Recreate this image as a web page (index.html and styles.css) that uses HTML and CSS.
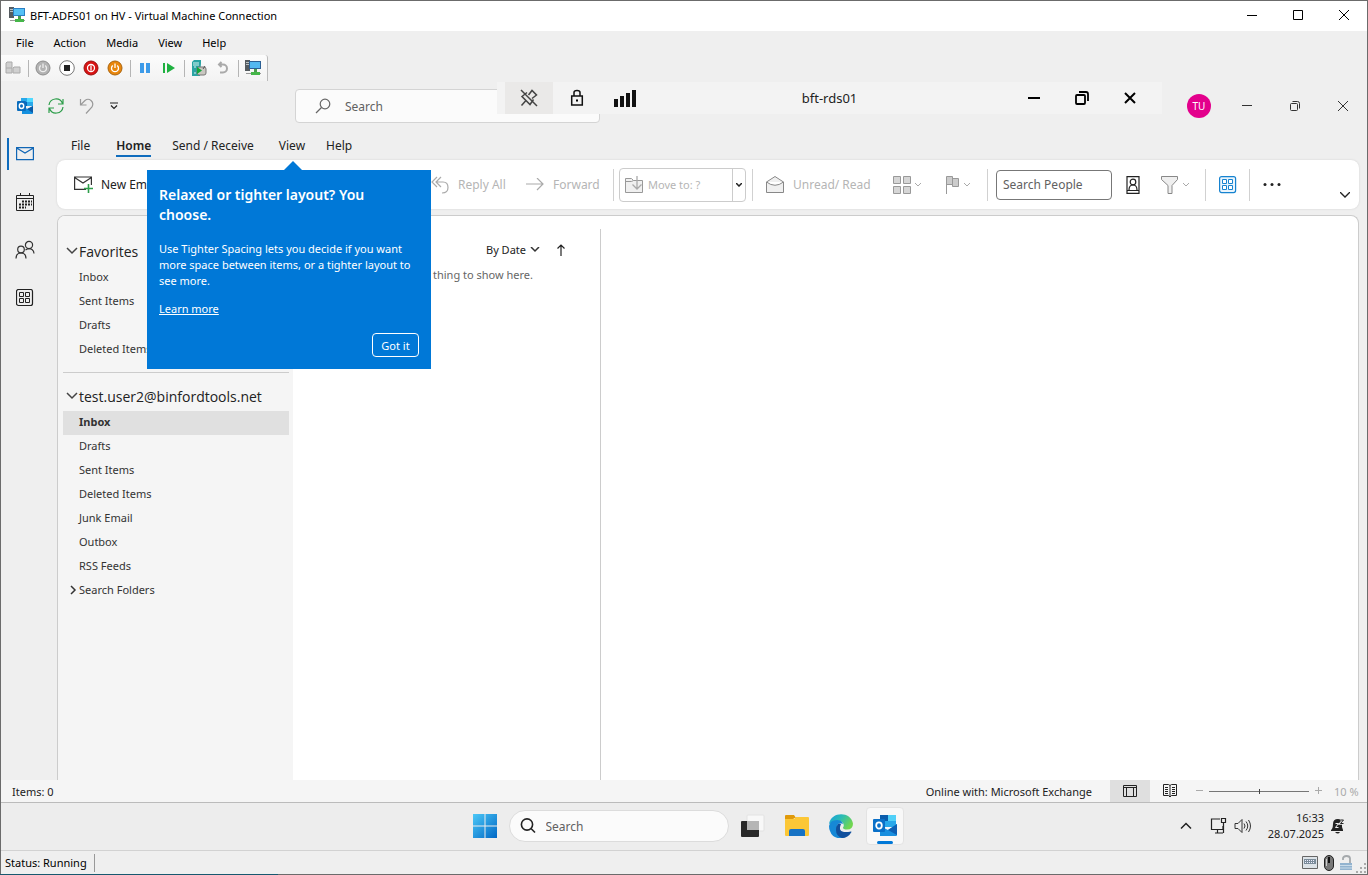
FILE: index.html
```html
<!DOCTYPE html>
<html lang="en">
<head>
    <meta charset="UTF-8">
    <meta name="viewport" content="width=device-width, initial-scale=1.0">
    <title>BFT-ADFS01 on HV - Virtual Machine Connection</title>
    <link rel="stylesheet" href="styles.css">
</head>
<body>
<div class="vm">
    <header class="vm-title">
        <svg width="16" height="16" viewBox="0 0 16 16"><path d="M0 0h5v11H0z" fill="#555b60"/><path d="M1 2.500h3M1 4.500h3" stroke="#b8c0c4"/><path d="M4 1h12v8H4z" fill="#2b7fc4"/><path d="M5 2h10v6H5z" fill="#54c0f5"/><path d="M9 9h3v3H9z" fill="#4a9c4e"/><path d="M1 13h15v1H1z" fill="#999"/><path d="M6 12h9v3H6z" fill="#45b649"/></svg>
        <span class="vm-name">BFT-ADFS01 on HV - Virtual Machine Connection</span>
        <button class="vm-win" aria-label="Minimize"><svg width="12" height="12" viewBox="0 0 12 12"><path d="M1 6.500h10" stroke="#000"/></svg></button>
        <button class="vm-win" aria-label="Maximize"><svg width="12" height="12" viewBox="0 0 12 12"><path d="M1.500 1.500h9v9h-9z" fill="none" stroke="#000"/></svg></button>
        <button class="vm-win" aria-label="Close"><svg width="12" height="12" viewBox="0 0 12 12"><path d="M1 1l10 10M11 1L1 11" stroke="#000"/></svg></button>
    </header>
    <nav class="vm-menu">
        <button>File</button><button>Action</button><button>Media</button><button>View</button><button>Help</button>
    </nav>
    <div class="vm-tools">
        <button aria-label="Ctrl Alt Delete"><svg width="16" height="16" viewBox="0 0 16 16"><path d="M1 8V3l1-1h5v6M1 8h6v5H1zM8 13V8l1-1h6v6z" fill="#d0d0d0" stroke="#aaa"/></svg></button>
        <i class="bar"></i>
        <button aria-label="Start"><svg width="16" height="16" viewBox="0 0 16 16"><circle cx="8" cy="8" r="7" fill="#b3b3b3" stroke="#8d8d8d"/><path d="M5.800 5.500a3.500 3.500 0 1 0 4.400 0M8 3.500v4.500" fill="none" stroke="#eee" stroke-width="1.300"/></svg></button>
        <button aria-label="Turn off"><svg width="16" height="16" viewBox="0 0 16 16"><circle cx="8" cy="8" r="7.300" fill="#fff" stroke="#777"/><path d="M5 5h6v6H5z" fill="#222"/></svg></button>
        <button aria-label="Shut down"><svg width="16" height="16" viewBox="0 0 16 16"><circle cx="8" cy="8" r="7" fill="#d81313" stroke="#9b1010"/><circle cx="8" cy="8" r="3.500" fill="none" stroke="#fff" stroke-width="1.300"/><path d="M8 5.500v5" stroke="#fff" stroke-width="1.300"/></svg></button>
        <button aria-label="Save"><svg width="16" height="16" viewBox="0 0 16 16"><circle cx="8" cy="8" r="7" fill="#e8860c" stroke="#a9640e"/><path d="M5.800 5.500a3.500 3.500 0 1 0 4.400 0M8 3.500v4.500" fill="none" stroke="#fff" stroke-width="1.300"/></svg></button>
        <i class="bar"></i>
        <button aria-label="Pause"><svg width="16" height="16" viewBox="0 0 16 16"><path d="M3 3h4v10H3zM9 3h4v10H9z" fill="#3d9be9"/></svg></button>
        <button aria-label="Reset"><svg width="16" height="16" viewBox="0 0 16 16"><path d="M2 3h2v10H2zM6 3v10l8-5z" fill="#1fb141"/></svg></button>
        <i class="bar"></i>
        <button aria-label="Checkpoint"><svg width="16" height="16" viewBox="0 0 16 16"><path d="M1 2l2-2h7v3l-1 13H1z" fill="#2aa3a3"/><path d="M2 3h6M2 5h6M3 7h2M3 13h2" stroke="#d8f3f2"/><rect x="6" y="7" width="9" height="8" rx="2" fill="#c9c7c0" stroke="#777"/><path d="M6 7l5 3.500L6 14z" fill="#11a83a"/><path d="M12 9l2-3" stroke="#555"/></svg></button>
        <button aria-label="Revert"><svg width="16" height="16" viewBox="0 0 16 16"><path d="M6.500 2L4 4.500 6.500 7M4.500 4.500H8a4 4 0 0 1 0 8H5" fill="none" stroke="#aaa" stroke-width="2"/></svg></button>
        <i class="bar"></i>
        <button aria-label="Enhanced session"><svg width="16" height="16" viewBox="0 0 16 16"><path d="M0 0h5v11H0z" fill="#555b60"/><path d="M1 2.500h3M1 4.500h3" stroke="#b8c0c4"/><path d="M4 1h12v8H4z" fill="#2b5f94"/><path d="M5 2h10v6H5z" fill="#54b8f0"/><path d="M9 9h3v3H9z" fill="#4a9c4e"/><path d="M1 13h15v1H1z" fill="#999"/><path d="M6 12h9v3H6z" fill="#45b649"/></svg></button>
    </div>

    <div class="screen">
        <div class="rdp-bar">
            <button class="rdp-pin" aria-label="Unpin"><svg width="18" height="18" viewBox="0 0 18 18" fill="none" stroke="#444" stroke-width="1.500"><path d="M1 1l16 16M1.500 16.500L5.500 12M7 3.500l-5 4 8 8 3.500-5M8.500 6L12 1.500 16.500 6 12 9.500"/></svg></button>
            <button aria-label="Security"><svg width="14" height="18" viewBox="0 0 14 18"><path d="M1.700 7h10.600v9H1.700zM4 7V3.500Q4 1.500 7 1.500t3 2V7" fill="none" stroke="#111" stroke-width="1.500"/><path d="M6 10.500h2v2H6z"/></svg></button>
            <button aria-label="Connection"><svg width="22" height="18" viewBox="0 0 22 18"><path d="M0 10h4v8H0zM6 7h4v11H6zM12 4h4v14h-4zM18 1h4v17h-4z" fill="#111"/></svg></button>
            <span class="rdp-name">bft-rds01</span>
            <button aria-label="Minimize"><svg width="14" height="14" viewBox="0 0 14 14"><path d="M1 7h12" stroke="#000" stroke-width="2"/></svg></button>
            <button aria-label="Restore"><svg width="14" height="14" viewBox="0 0 14 14" fill="none" stroke="#000" stroke-width="1.800"><rect x="1" y="4" width="9" height="9" rx="1"/><path d="M4 1h7q2 0 2 2v7"/></svg></button>
            <button aria-label="Close"><svg width="14" height="14" viewBox="0 0 14 14"><path d="M2 2l10 10M12 2L2 12" stroke="#000" stroke-width="2"/></svg></button>
        </div>

        <header class="ol-title">
            <svg width="16" height="16" viewBox="0 0 16 16"><path d="M4 0h12v8H4z" fill="#28a8ea"/><path d="M10 0h6v4h-6z" fill="#50d9ff"/><path d="M4 4h6v4H4z" fill="#0364b8"/><path d="M5 8l5.500 3L16 8v7q0 1-1 1H5z" fill="#1490df"/><path d="M10 11l6 4V8z" fill="#0a5ba8"/><rect y="3" width="9" height="10" rx="1" fill="#0a6cbd"/><ellipse cx="4.500" cy="8" rx="2.200" ry="2.500" fill="none" stroke="#fff" stroke-width="1.400"/></svg>
            <button aria-label="Send and receive all"><svg width="16" height="16" viewBox="0 0 16 16" fill="none" stroke="#2e9e4b" stroke-width="1.200"><path d="M1 7a7 7 0 0 1 13.500-1.500M15 1v5h-5M15 9a7 7 0 0 1-13.500 1.500M1 15v-5h5"/></svg></button>
            <button aria-label="Undo"><svg width="16" height="16" viewBox="0 0 16 16" fill="none" stroke="#999" stroke-width="1.200"><path d="M1.500 1v6h6M1.500 7L6 2.500Q9 0 12 2.500t1 6.500L7 15.500"/></svg></button>
            <button aria-label="Customize toolbar"><svg width="8" height="8" viewBox="0 0 8 8" fill="none" stroke="#222" stroke-width="1.200"><path d="M0 1h8M1 3.500l3 3 3-3"/></svg></button>
            <label class="ol-search">
                <svg width="16" height="16" viewBox="0 0 16 16" fill="none" stroke="#666" stroke-width="1.200"><circle cx="10" cy="6" r="4.800"/><path d="M6.500 9.500L1 15"/></svg>
                <input type="text" placeholder="Search" aria-label="Search mail">
            </label>
            <button class="avatar">TU</button>
            <button class="ol-win" aria-label="Minimize window"><svg width="10" height="10" viewBox="0 0 10 10"><path d="M0 4.500h10" stroke="#333"/></svg></button>
            <button class="ol-win" aria-label="Restore window"><svg width="10" height="10" viewBox="0 0 10 10" fill="none" stroke="#333"><rect x=".5" y="2.500" width="7" height="7" rx="1"/><path d="M2.500.5h5q2 0 2 2v5"/></svg></button>
            <button class="ol-win" aria-label="Close window"><svg width="10" height="10" viewBox="0 0 10 10"><path d="M0 0l10 10M10 0L0 10" stroke="#333"/></svg></button>
        </header>

        <div class="ol-body">
            <nav class="rail">
                <button class="on" aria-label="Mail"><svg width="18" height="18" viewBox="0 0 18 18" fill="none" stroke="#1066b5" stroke-width="1.200"><path d="M.6 2.600h16.800v12H.6zM.6 3L9 8l8.400-5"/></svg></button>
                <button aria-label="Calendar"><svg width="18" height="18" viewBox="0 0 18 18" fill="none" stroke="#222"><path d="M.5 2.500h17v15H.5zM.5 5.500h17M4.500 0v3M13.500 0v3"/><path d="M6 8.500h10M3 11.500h13M3 14.500h7" stroke-width="2" stroke-dasharray="2 1"/></svg></button>
                <button aria-label="People"><svg width="20" height="20" viewBox="0 0 20 20" fill="none" stroke="#333" stroke-width="1.200"><circle cx="6" cy="9.500" r="3.300"/><path d="M1 18.500q0-5.500 5-5.500t5 5.500"/><circle cx="14" cy="5" r="3.600"/><path d="M10.500 10q3.500-2.500 6.500-.5 2 1.500 2 4"/></svg></button>
                <button aria-label="More apps"><svg width="18" height="18" viewBox="0 0 18 18" fill="none" stroke="#222"><rect x=".5" y=".5" width="16" height="16" rx="2" stroke-width="1.200"/><path d="M3.500 3.500h4v4h-4zM9.500 3.500h4v4h-4zM3.500 9.500h4v4h-4zM9.500 9.500h4v4h-4z"/></svg></button>
            </nav>

            <main class="main">
                <nav class="tabs">
                    <button>File</button><button class="on">Home</button><button>Send / Receive</button><button>View</button><button>Help</button>
                </nav>
                <div class="ribbon">
                    <button class="cmd new"><svg width="20" height="18" viewBox="0 0 20 18" fill="none" stroke="#333" stroke-width="1.200"><path d="M12 13.400H.6V1h16.800v8M.6 1.500L9 7l8.400-5.500"/><path d="M10 12.500h9M14.500 8v9" stroke="#2e9e4b" stroke-width="1.600"/></svg>New Email</button>
                    <button class="cmd dim reply"><svg width="18" height="18" viewBox="0 0 18 18" fill="none" stroke="#aaa" stroke-width="1.200"><path d="M6 1L1 6l5 5M10 1L5 6l5 5M5 6h7q5 0 5 5.500T11 17"/></svg>Reply All</button>
                    <button class="cmd dim forward"><svg width="18" height="14" viewBox="0 0 18 14" fill="none" stroke="#aaa" stroke-width="1.200"><path d="M0 6h17M11 0l6 6-6 6"/></svg>Forward</button>
                    <i class="sep"></i>
                    <div class="move">
                        <button class="cmd dim"><svg width="18" height="18" viewBox="0 0 18 18" fill="#f0f0f0" stroke="#999"><path d="M.5 2.500h6l2 2h9v12H.5z"/><path d="M.5 5.500h6l2-1" fill="none"/><path d="M12 0v13M7.500 8.500L12 13l4.500-4.500" fill="none" stroke="#aaa" stroke-width="1.300"/></svg>Move to: ?</button>
                        <button class="drop" aria-label="Move options"><svg width="6" height="4" viewBox="0 0 6 4"><path d="M0 0l3 3 3-3" fill="none" stroke="#222" stroke-width="1.500"/></svg></button>
                    </div>
                    <i class="sep"></i>
                    <button class="cmd dim unread"><svg width="18" height="18" viewBox="0 0 18 18" fill="#f0f0f0" stroke="#888"><path d="M.5 6L9 .5 17.500 6v10.500H.5zM.5 6Q9 12.500 17.500 6"/></svg>Unread/ Read</button>
                    <button class="cmd split" aria-label="Categorize"><svg width="18" height="18" viewBox="0 0 18 18" fill="#d6d6d6" stroke="#999"><path d="M.5.5h7v7h-7zM10.500.5h7v7h-7zM.5 10.500h7v7h-7zM10.500 10.500h7v7h-7z"/></svg><svg width="6" height="4" viewBox="0 0 6 4"><path d="M0 0l3 3 3-3" fill="none" stroke="#aaa"/></svg></button>
                    <button class="cmd split flag" aria-label="Follow up"><svg width="14" height="18" viewBox="0 0 14 18" fill="#ccc" stroke="#999"><path d="M6.500 2.500h6v8h-6z"/><path d="M.5 18V.5h6v8h-6"/></svg><svg width="6" height="4" viewBox="0 0 6 4"><path d="M0 0l3 3 3-3" fill="none" stroke="#aaa"/></svg></button>
                    <i class="sep"></i>
                    <input class="people" type="text" placeholder="Search People" aria-label="Search people">
                    <button class="cmd" aria-label="Address book"><svg width="14" height="18" viewBox="0 0 14 18" fill="none" stroke="#222" stroke-width="1.200"><path d="M1 .6h12v16.800H1zM1 14.500h12M3 14q0-5 4-5t4 5"/><circle cx="7" cy="6" r="2.800"/></svg></button>
                    <button class="cmd split filter" aria-label="Filter email"><svg width="18" height="18" viewBox="0 0 18 18" fill="#efefef" stroke="#888"><path d="M.5.5h16v3l-5.500 6v8H7v-8l-6.500-6z"/></svg><svg width="6" height="4" viewBox="0 0 6 4"><path d="M0 0l3 3 3-3" fill="none" stroke="#aaa"/></svg></button>
                    <i class="sep"></i>
                    <button class="cmd addins" aria-label="All apps"><svg width="18" height="18" viewBox="0 0 18 18" fill="#eaf5fd" stroke="#1683d0"><rect x=".6" y=".6" width="16" height="16" rx="2" stroke-width="1.200"/><path d="M3.500 3.500h4v4h-4zM9.500 3.500h4v4h-4zM3.500 9.500h4v4h-4zM9.500 9.500h4v4h-4z" fill="#fff"/></svg></button>
                    <i class="sep"></i>
                    <button class="cmd more" aria-label="More commands"><svg width="18" height="4" viewBox="0 0 18 4" fill="#222"><circle cx="2" cy="1.500" r="1.500"/><circle cx="9" cy="1.500" r="1.500"/><circle cx="16" cy="1.500" r="1.500"/></svg></button>
                    <button class="collapse" aria-label="Ribbon options"><svg width="10" height="6" viewBox="0 0 10 6"><path d="M0 0l5 5 5-5" fill="none" stroke="#222" stroke-width="1.300"/></svg></button>
                </div>

                <div class="panes">
                    <aside class="folders">
                        <h2><svg width="12" height="8" viewBox="0 0 12 8"><path d="M1 1l5 5 5-5" fill="none" stroke="#444" stroke-width="1.500"/></svg>Favorites</h2>
                        <ul>
                            <li><a href="#">Inbox</a></li>
                            <li><a href="#">Sent Items</a></li>
                            <li><a href="#">Drafts</a></li>
                            <li><a href="#">Deleted Items</a></li>
                        </ul>
                        <hr>
                        <h2><svg width="12" height="8" viewBox="0 0 12 8"><path d="M1 1l5 5 5-5" fill="none" stroke="#444" stroke-width="1.500"/></svg>test.user2@binfordtools.net</h2>
                        <ul>
                            <li class="on"><a href="#">Inbox</a></li>
                            <li><a href="#">Drafts</a></li>
                            <li><a href="#">Sent Items</a></li>
                            <li><a href="#">Deleted Items</a></li>
                            <li><a href="#">Junk Email</a></li>
                            <li><a href="#">Outbox</a></li>
                            <li><a href="#">RSS Feeds</a></li>
                            <li class="tree"><svg width="8" height="10" viewBox="0 0 8 10"><path d="M2 1l4 4-4 4" fill="none" stroke="#333" stroke-width="1.500"/></svg><a href="#">Search Folders</a></li>
                        </ul>
                    </aside>
                    <section class="list">
                        <div class="sort">
                            <button>By Date<svg width="10" height="6" viewBox="0 0 10 6"><path d="M1 0l4 4 4-4" fill="none" stroke="#333" stroke-width="1.500"/></svg></button>
                            <button aria-label="Sort direction"><svg width="8" height="12" viewBox="0 0 8 12"><path d="M4 12V1M.5 4.500L4 1l3.500 3.500" fill="none" stroke="#222" stroke-width="1.200"/></svg></button>
                        </div>
                        <p>thing to show here.</p>
                    </section>
                    <section class="reading"></section>
                </div>

                <div class="callout">
                    <h3>Relaxed or tighter layout? You choose.</h3>
                    <p>Use Tighter Spacing lets you decide if you want more space between items, or a tighter layout to see more.</p>
                    <a href="#">Learn more</a>
                    <button>Got it</button>
                </div>
            </main>
        </div>

        <footer class="ol-status">
            <span class="items">Items: 0</span>
            <span class="online">Online with: Microsoft Exchange</span>
            <button class="view on" aria-label="Normal view"><svg width="14" height="12" viewBox="0 0 14 12" fill="none" stroke="#222"><path d="M.5.5h13v11H.5zM.5 2.500h13M3.500 2.500v9M10.500 2.500v9"/></svg></button>
            <button class="view" aria-label="Reading view"><svg width="14" height="14" viewBox="0 0 14 14" fill="none" stroke="#222"><path d="M.5.5h5L7 1.500 8.500.5h5v11h-5L7 13 5.500 11.500h-5zM7 1.500V13M2 3.500h3M2 5.500h3M2 7.500h3M2 9.500h3M9 3.500h3M9 5.500h3M9 7.500h3M9 9.500h3"/></svg></button>
            <button class="zoom-btn" aria-label="Zoom out"><svg width="8" height="8" viewBox="0 0 8 8"><path d="M0 3.500h7" stroke="#aaa"/></svg></button>
            <input class="zoom" type="range" min="0" max="100" value="50" aria-label="Zoom">
            <button class="zoom-btn" aria-label="Zoom in"><svg width="8" height="8" viewBox="0 0 8 8"><path d="M0 3.500h7M3.500 0v7" stroke="#aaa"/></svg></button>
            <span class="percent">10 %</span>
        </footer>

        <div class="taskbar">
            <div class="apps">
                <button aria-label="Start menu"><svg width="24" height="24" viewBox="0 0 24 24"><defs><linearGradient id="win" x2="1" y2="1"><stop stop-color="#4cc8f7"/><stop offset="1" stop-color="#0067c5"/></linearGradient></defs><path d="M0 0h11.500v11.500H0zM12.500 0H24v11.500H12.500zM0 12.500h11.500V24H0zM12.500 12.500H24V24H12.500z" fill="url(#win)"/></svg></button>
                <label class="tb-search">
                    <svg width="16" height="16" viewBox="0 0 16 16" fill="none" stroke="#222" stroke-width="1.600"><circle cx="7" cy="6.500" r="5.600"/><path d="M11 10.500l4 4"/></svg>
                    <input type="text" placeholder="Search" aria-label="Search Windows">
                </label>
                <button class="app" aria-label="Task view"><svg width="24" height="24" viewBox="0 0 24 24"><rect x="6" y="1" width="17" height="16" rx="1" fill="#f8f8f8" stroke="#e2e2e2"/><rect x="0" y="7" width="18" height="16" rx="1" fill="#292929"/><path d="M6 7h12v9H6z" fill="#b5b5b5"/></svg></button>
                <button class="app" aria-label="File Explorer"><svg width="24" height="24" viewBox="0 0 24 24"><path d="M0 2q0-1 1-1h8l2 3h-2l-1 2H0z" fill="#e09a0b"/><path d="M0 5h9l2-2h12q1 0 1 1v17q0 1-1 1H1q-1 0-1-1z" fill="#fcc736"/><path d="M4 22v-5q0-2 2-2h12q2 0 2 2v5z" fill="#1672c4"/></svg></button>
                <button class="app" aria-label="Edge"><svg width="24" height="24" viewBox="0 0 24 24"><defs><linearGradient id="edge" x2="1" y2=".5"><stop stop-color="#159de0"/><stop offset=".5" stop-color="#2cbcb4"/><stop offset="1" stop-color="#71d650"/></linearGradient></defs><path d="M0 10C2-3 22-3 24 9.500q0 6-6 6-4 0-4-2 2-3-1-5.500Q8 4.500 0 10z" fill="url(#edge)"/><path d="M0 12Q1 6 8 6q5 0 6 4-5-2-6 2-1 9 8 12Q4 26 1 17q-1-2-1-5z" fill="#1688d6"/><path d="M9 10q2-1 3 0-4 9 7 8 4-1 3.500 0Q19 24 13 24q-6-2-6-8 0-4 2-6z" fill="#11509d"/></svg></button>
                <button class="app active" aria-label="Outlook"><svg width="24" height="24" viewBox="0 0 24 24"><path d="M7 1h16v12H7z" fill="#28a8ea"/><path d="M15 1h8v6h-8z" fill="#50d0f8"/><path d="M7 1h8v6H7z" fill="#0a5dac"/><path d="M7 12l8 4 9-6v11q0 1-1 1H7z" fill="#1a90df"/><path d="M15 16l9 5V10z" fill="#0d60b5"/><rect y="5" width="12" height="13" rx="1" fill="#0a70c8"/><ellipse cx="6" cy="11.500" rx="2.800" ry="3.200" fill="none" stroke="#fff" stroke-width="1.800"/></svg></button>
            </div>
            <div class="tray">
                <button aria-label="Hidden icons"><svg width="12" height="8" viewBox="0 0 12 8"><path d="M1 6.500l5-5 5 5" fill="none" stroke="#222" stroke-width="1.500"/></svg></button>
                <button aria-label="Network"><svg width="18" height="18" viewBox="0 0 18 18" fill="none" stroke="#222" stroke-width="1.200"><path d="M10 2H1.500v10.500H13V9M5 16h8M7.500 12.500V16"/><path d="M11.500 1.500h4v4h-4zM13.500 5.500V16"/></svg></button>
                <button aria-label="Volume"><svg width="18" height="16" viewBox="0 0 18 16" fill="none" stroke="#333"><path d="M1 5.500h3l4-4v13l-4-4H1zM10 5.500q2 2.500 0 5M12 3.500q3.500 4.500 0 9M14.500 2q4 6 0 12"/></svg></button>
                <time>16:33<br>28.07.2025</time>
                <button aria-label="Notifications"><svg width="16" height="16" viewBox="0 0 16 16"><path d="M2 11q1-2 1-5 0-5 5-5 3 0 4 2v6l1 3v1H1v-1zM5 14h5q-2 3-5 0z" fill="#222"/><path d="M5.500 5.500h3L5.500 9.500h3" fill="none" stroke="#eee"/><path d="M10.500 2h3L10.500 5.500h3" fill="none" stroke="#eee" stroke-width="2.600"/><path d="M10.500 2h3L10.500 5.500h3" fill="none" stroke="#222"/></svg></button>
            </div>
        </div>
    </div>

    <footer class="vm-status">
        <span>Status: Running</span>
        <svg width="16" height="14" viewBox="0 0 16 14"><path d="M.5.5h15v12H.5z" fill="#dde3e8" stroke="#666"/><path d="M2 3h12v5H2z" fill="#7b8c9a"/><path d="M3 4.500h10M3 6.500h10" stroke="#eef" stroke-dasharray="1 1"/></svg>
        <svg width="10" height="16" viewBox="0 0 10 16"><rect x=".5" y=".5" width="9" height="15" rx="4.500" fill="#777" stroke="#222"/><path d="M5 2v6" stroke="#111" stroke-width="2"/><path d="M2.500 4v7" stroke="#ccc"/></svg>
        <svg width="12" height="16" viewBox="0 0 12 16"><path d="M3 5V3.500Q3 1 6.500 1T10 3.500V8" fill="none" stroke="#a5a9ac" stroke-width="1.800"/><path d="M0 8h12v7H0z" fill="#92b3cf"/><path d="M0 10.500h12M0 13h12" stroke="#c9dbe9"/></svg>
        <svg class="grip" width="11" height="11" viewBox="0 0 11 11"><path d="M8 0h2v2H8zM4 4h2v2H4zM8 4h2v2H8zM0 8h2v2H0zM4 8h2v2H4zM8 8h2v2H8z" fill="#aaa"/></svg>
    </footer>
</div>
</body>
</html>
```
FILE: styles.css
```css
* {
    box-sizing: border-box;
}
body {
    margin: 0;
    padding: 1px;
    background: linear-gradient(#17586f, #17586f) left bottom / 278px 1px no-repeat #6b6b6b;
    font-family: "Noto Sans", "Open Sans", sans-serif;
    font-size: 11px;
    color: #222;
}
button, input {
    font: inherit;
    color: inherit;
    border: none;
    background: none;
    padding: 0;
    margin: 0;
}
button {
    display: flex;
    align-items: center;
    justify-content: center;
    white-space: nowrap;
}
svg {
    display: block;
    flex: none;
}
.vm {
    min-height: calc(100vh - 2px);
    display: flex;
    flex-direction: column;
    background: #efefef;
}

/* Hyper-V window */
.vm-title {
    height: 30px;
    display: flex;
    align-items: center;
    padding: 0 0 2px 8px;
    background: #fff;
    color: #000;
}
.vm-name {
    flex: 1;
    padding-left: 5px;
}
.vm-win {
    width: 46px;
    height: 28px;
}
.vm-menu {
    height: 24px;
    display: flex;
    align-items: center;
    gap: 20px;
    padding: 0 0 2px 15px;
    color: #000;
}
.vm-tools {
    align-self: flex-start;
    height: 26px;
    display: flex;
    align-items: center;
    gap: 8px;
    padding: 0 6px 0 4px;
    background: linear-gradient(#fcfcfc, #f3f3f3);
    border-right: 1px solid #bbb;
    border-radius: 0 3px 0 0;
}
.bar {
    width: 1px;
    height: 17px;
    background: #b5b5b5;
    margin: 0 -2px 0 -1px;
}
.vm-status {
    height: 24px;
    display: flex;
    align-items: center;
    gap: 6px;
    padding-left: 4px;
    border-top: 1px solid #d2d2d2;
    color: #000;
}
.vm-status span {
    margin-right: auto;
    padding-right: 7px;
    border-right: 1px solid #999;
    line-height: 18px;
}
.grip {
    align-self: flex-end;
    margin-left: -2px;
}

/* Remote session bar */
.screen {
    position: relative;
    flex: 1;
    display: flex;
    flex-direction: column;
}
.rdp-bar {
    position: absolute;
    top: 1px;
    left: 496px;
    right: 205px;
    height: 32px;
    display: flex;
    padding: 0 8px;
    background: #f3f3f3;
    z-index: 2;
}
.rdp-bar button {
    width: 48px;
}
.rdp-bar .rdp-pin {
    background: #eae9e8;
}
.rdp-name {
    flex: 1;
    text-align: center;
    font-size: 13px;
    line-height: 32px;
}

/* Outlook title row */
.ol-title {
    height: 50px;
    display: flex;
    align-items: center;
    padding-left: 16px;
    gap: 15px;
}
.ol-search {
    width: 305px;
    height: 34px;
    margin-left: 162px;
    margin-right: auto;
    display: flex;
    align-items: center;
    gap: 14px;
    padding: 0 19px;
    background: #fbfbfb;
    border: 1px solid #d4d4d4;
    border-radius: 4px;
    font-size: 12px;
}
input {
    min-width: 0;
    flex: 1;
    outline: none;
}
input::placeholder {
    color: #616161;
    opacity: 1;
}
.avatar {
    width: 24px;
    height: 24px;
    border-radius: 50%;
    background: #e3008c;
    color: #fff;
    font-size: 10px;
    margin-right: -3px;
}
.ol-win {
    width: 48px;
    height: 32px;
    margin-left: -15px;
}
.ol-win:nth-last-child(3) {
    margin-left: 0;
}

/* Outlook body */
.ol-body {
    flex: 1;
    display: flex;
}
.rail {
    width: 56px;
    padding-top: 7px;
    display: flex;
    flex-direction: column;
    gap: 16px;
}
.rail button {
    width: 34px;
    height: 32px;
    margin-left: 6px;
    border-left: 2px solid transparent;
}
.rail button.on {
    border-color: #0f6cbd;
}
.main {
    position: relative;
    flex: 1;
    min-width: 0;
    padding-right: 8px;
    display: flex;
    flex-direction: column;
}
.tabs {
    height: 29px;
    padding-left: 14px;
    display: flex;
    gap: 21px;
    font-size: 12px;
    align-items: flex-start;
}
.tabs button {
    height: 26px;
    padding-top: 4px;
    border-bottom: 2px solid transparent;
}
.tabs button:first-child {
    margin-right: 5px;
}
.tabs .on {
    font-weight: 600;
    border-color: #0f6cbd;
}
.tabs .on + button {
    padding-right: 4px;
}
.ribbon {
    height: 49px;
    display: flex;
    align-items: center;
    padding-left: 17px;
    background: #fff;
    border-radius: 8px;
    box-shadow: 0 0 2px #ccc;
    font-size: 12px;
}
.cmd {
    gap: 8px;
}
.dim {
    color: #b5b5b5;
}
.split {
    gap: 4px;
}
.new {
    width: 357px;
    gap: 7px;
    justify-content: flex-start;
}
.reply {
    width: 78px;
    gap: 9px;
    margin-right: 17px;
    justify-content: flex-start;
}
.forward {
    width: 76px;
    gap: 9px;
    margin-right: 11px;
    justify-content: flex-start;
}
.sep {
    width: 1px;
    height: 32px;
    background: #d1d1d1;
}
.move {
    width: 127px;
    height: 34px;
    margin: 0 6px 0 5px;
    display: flex;
    border: 1px solid #ccc;
    border-radius: 4px;
    font-size: 11px;
}
.move .cmd {
    flex: 1;
    gap: 5px;
    padding-left: 5px;
    justify-content: flex-start;
}
.drop {
    width: 13px;
    border-left: 1px solid #ccc;
}
.unread {
    width: 110px;
    gap: 9px;
    margin: 0 17px 0 13px;
    justify-content: flex-start;
}
.flag {
    margin: 0 17px 0 25px;
}
.people {
    flex: none;
    width: 116px;
    height: 30px;
    margin: 0 14px 0 8px;
    padding: 0 6px;
    border: 1px solid #777;
    border-radius: 4px;
}
.filter {
    margin: 0 16px 0 21px;
}
.addins {
    margin: 0 12px 0 13px;
}
.more {
    margin-left: 13px;
}
.collapse {
    align-self: flex-end;
    margin: 0 9px 11px auto;
}
.panes {
    flex: 1;
    display: flex;
    margin-top: 6px;
    background: #fff;
    border: 1px solid #ccc;
    border-bottom: none;
    border-radius: 8px 8px 0 0;
    overflow: hidden;
}

/* Folder pane */
.folders {
    width: 235px;
    padding: 21px 4px 0 5px;
    background: #f5f5f5;
}
.folders h2 {
    height: 29px;
    margin: 0;
    padding: 0 0 1px 3px;
    display: flex;
    align-items: center;
    gap: 1px;
    font-family: "Open Sans", sans-serif;
    font-size: 14px;
    font-weight: 400;
}
.folders ul {
    list-style: none;
    margin: 0;
    padding: 0;
}
.folders li {
    height: 24px;
    display: flex;
    align-items: center;
    padding: 0 0 3px 16px;
}
.folders li.on {
    background: #e0e0e0;
    font-weight: 700;
}
.folders li.tree {
    padding-left: 6px;
    gap: 2px;
}
.folders a {
    color: #333;
    text-decoration: none;
}
.folders hr {
    height: 1px;
    margin: 10px 0 9px;
    border: none;
    background: #ccc;
}
.list {
    width: 307px;
    padding-top: 26px;
}
.sort {
    display: flex;
    justify-content: flex-end;
    gap: 17px;
    padding-right: 35px;
}
.sort button {
    gap: 4px;
}
.list p {
    margin: 10px 0 0;
    padding-right: 67px;
    text-align: right;
    color: #666;
}
.reading {
    flex: 1;
    margin-top: 13px;
    border-left: 1px solid #ccc;
}

/* Teaching callout */
.callout {
    position: absolute;
    top: 39px;
    left: 90px;
    width: 284px;
    height: 199px;
    padding: 15px 12px 12px;
    display: flex;
    flex-direction: column;
    align-items: flex-start;
    background: #0078d7;
    color: #fff;
}
.callout::before {
    content: "";
    position: absolute;
    top: -9px;
    left: 137px;
    border: 9px solid transparent;
    border-top: none;
    border-bottom-color: #0078d7;
}
.callout h3 {
    margin: 0 0 16px;
    padding-right: 24px;
    font-size: 14px;
    font-weight: 600;
    line-height: 20px;
}
.callout p {
    margin: 0 0 12px;
    line-height: 16px;
}
.callout a {
    color: #fff;
    line-height: 16px;
}
.callout button {
    width: 47px;
    height: 24px;
    margin-top: auto;
    align-self: flex-end;
    border: 1px solid #fff;
    border-radius: 4px;
}

/* Outlook status bar */
.ol-status {
    height: 22px;
    display: flex;
    align-items: center;
    padding-left: 11px;
    background: #f5f5f5;
}
.items {
    margin-right: auto;
}
.online {
    margin-right: 18px;
}
.view {
    width: 40px;
    height: 22px;
}
.view.on {
    background: #dfdfdf;
}
.zoom-btn {
    width: 8px;
    margin-left: 6px;
}
.zoom {
    flex: none;
    width: 100px;
    height: 5px;
    margin-left: 5px;
    appearance: none;
    background: linear-gradient(#777, #777) center / 100% 1px no-repeat;
}
.zoom::-webkit-slider-thumb {
    appearance: none;
    width: 1px;
    height: 5px;
    background: #444;
}
.percent {
    width: 44px;
    padding-left: 11px;
    color: #aaa;
}

/* Windows taskbar */
.taskbar {
    height: 48px;
    display: flex;
    align-items: center;
    justify-content: flex-end;
    padding-bottom: 1px;
    border-top: 1px solid #bbb;
    background: #ededed;
}
.apps {
    flex: 1;
    display: flex;
    align-items: center;
    justify-content: center;
    padding-left: 195px;
}
.tb-search {
    width: 220px;
    height: 32px;
    margin: 0 -1px 0 12px;
    display: flex;
    align-items: center;
    gap: 10px;
    padding: 0 10px;
    background: #fbfbfb;
    border: 1px solid #dcdcdc;
    border-radius: 16px;
    font-size: 12px;
}
.app {
    position: relative;
    width: 38px;
    height: 38px;
    margin-left: 6px;
}
.app.active {
    background: #f8f8f8;
    border: 1px solid #e3e3e3;
    border-radius: 4px;
}
.app.active::after {
    content: "";
    position: absolute;
    bottom: 0;
    left: 10px;
    width: 16px;
    height: 3px;
    border-radius: 2px;
    background: #0078d7;
}
.tray {
    width: 187px;
    display: flex;
    align-items: center;
    gap: 6px;
}
.tray button:first-child {
    margin-right: 12px;
}
.tray time {
    width: 63px;
    margin-left: 3px;
    text-align: right;
    line-height: 16px;
}
```
